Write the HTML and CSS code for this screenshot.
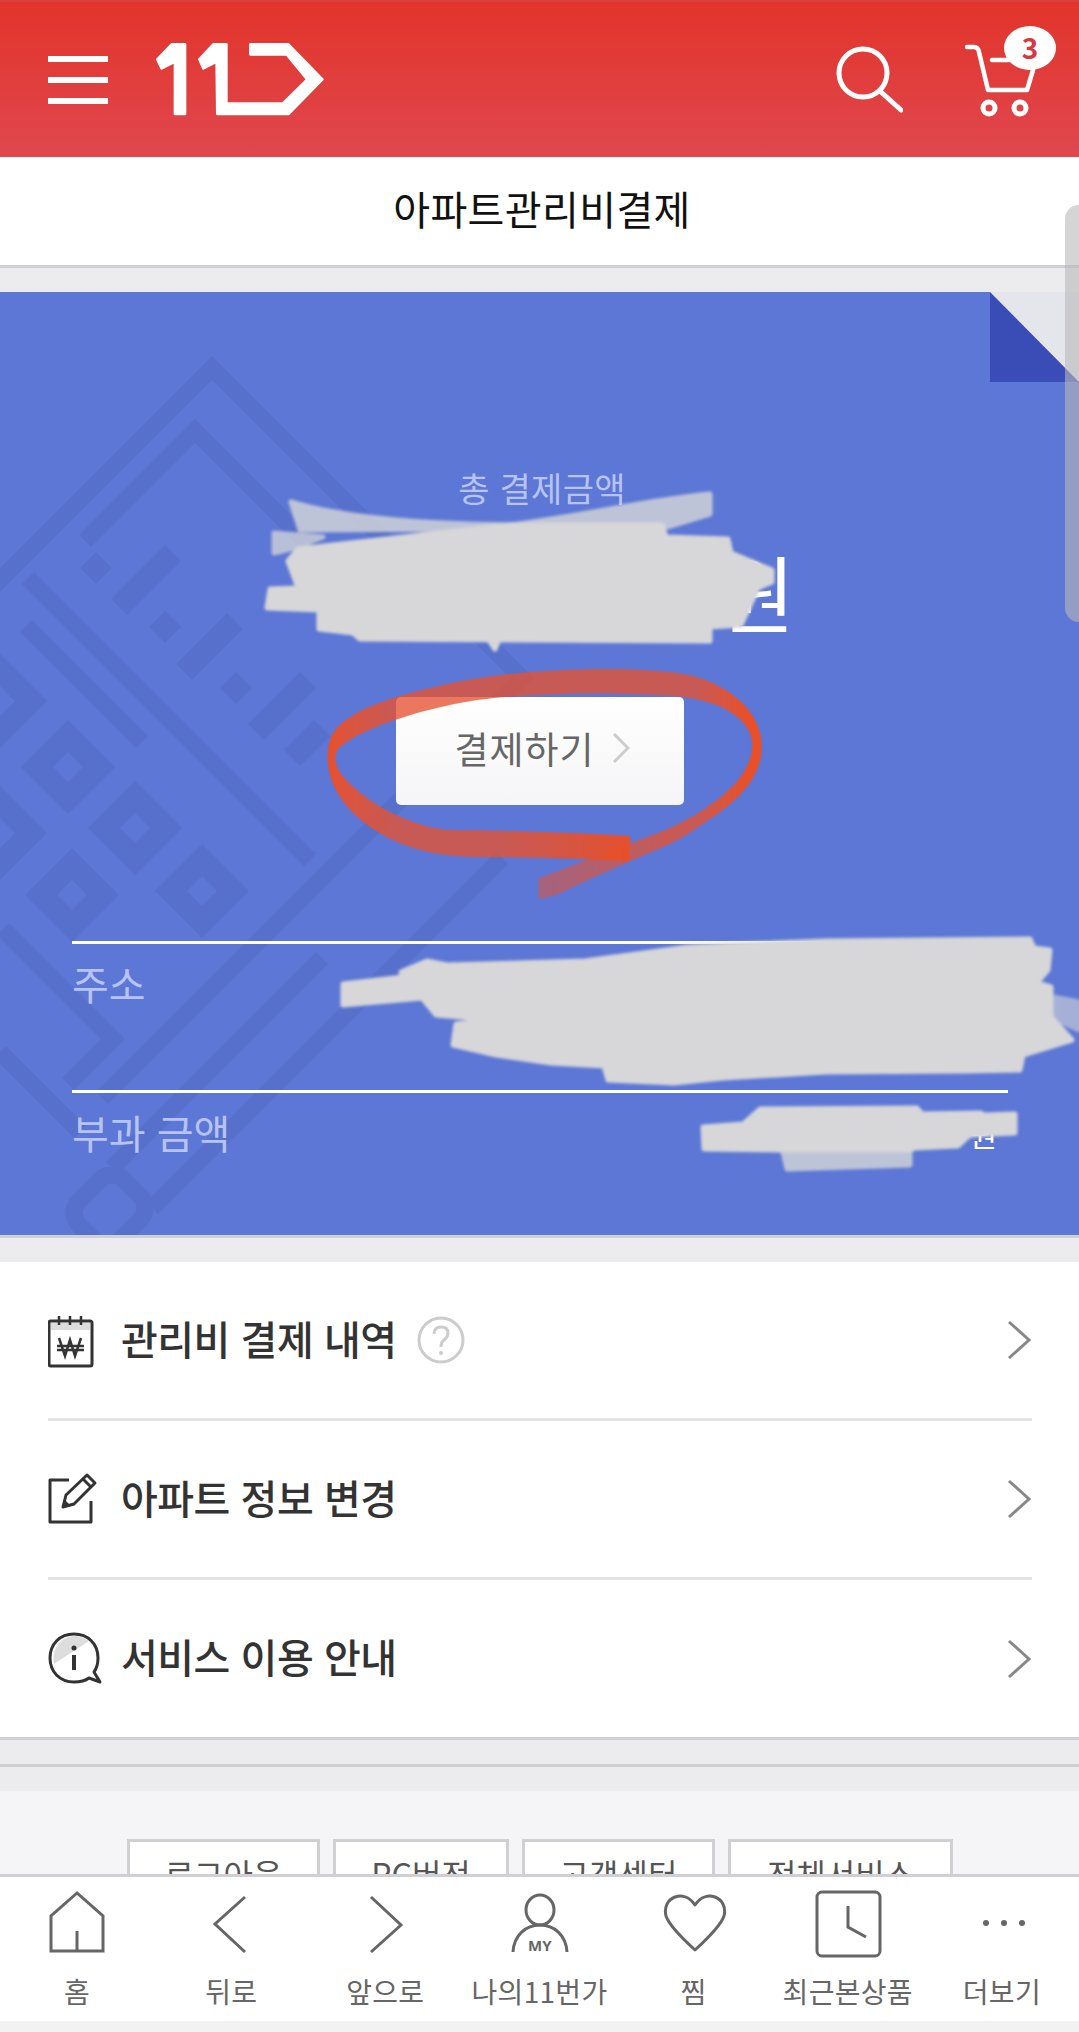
FILE: index.html
```html
<!DOCTYPE html>
<html lang="ko">
  <head>
    <meta charset="UTF-8">
    <title>아파트관리비결제</title>
    <link rel="stylesheet" href="styles.css">
  </head>
  <body>
    <div class="page">

      <!-- red top bar -->
      <div class="topbar">
        <div class="menu-btn"><span></span><span></span><span></span></div>
        <svg class="logo" width="170" height="80" viewBox="378 60 510 240">
          <path fill="#fff" stroke="#fff" stroke-width="8" stroke-linejoin="round" d="M382 118 L425 73 L465 73 L465 282 L435 282 L435 125 L395 145 Z"/>
          <path fill="#fff" stroke="#fff" stroke-width="8" stroke-linejoin="round" d="M508 118 L550 73 L589 73 L589 251 L758 251 L832 178 L770 103 L661 103 L661 73 L775 73 L877 178 L775 282 L562 282 L560 125 L520 145 Z"/>
        </svg>
        <div class="spacer"></div>
        <svg class="search" width="70" height="70" viewBox="0 0 70 70">
          <circle cx="30" cy="30" r="24" fill="none" stroke="#fff" stroke-width="5"/>
          <path d="M48 49 L68 67" stroke="#fff" stroke-width="5" stroke-linecap="round"/>
        </svg>
        <div class="cart">
          <svg width="72" height="80" viewBox="0 0 72 80">
            <path d="M2 7 H9 Q13 7 14 12 L23 50 H62 L68 30" fill="none" stroke="#fff" stroke-width="4.5" stroke-linecap="round" stroke-linejoin="round"/>
            <path d="M27 20 H45" stroke="#fff" stroke-width="4.5" stroke-linecap="round"/>
            <circle cx="24" cy="68" r="6" fill="none" stroke="#fff" stroke-width="5"/>
            <circle cx="55" cy="68" r="6" fill="none" stroke="#fff" stroke-width="5"/>
          </svg>
          <span class="cart-count">3</span>
        </div>
      </div>

      <div class="page-title">아파트관리비결제</div>
      <div class="band"></div>

      <!-- blue pay panel -->
      <div class="pay-panel">
        <svg class="pattern" width="1079" height="943" viewBox="0 292 1079 943">
          <g transform="translate(207 363) matrix(1 1 -1 1 0 0)" fill="none" stroke="#5770cc" stroke-width="12">
            <path d="M5 230 V0 H315 V420"/>
            <path d="M28 150 V40 H215"/>
            <path d="M18 197 H300"/>
            <path d="M41 222 H157"/>
            <path d="M181 385 H291 V430"/>
            <path d="M241 448 H321"/>
            <path d="M395 100 V450"/>
            <path d="M355 240 V450"/>
            <rect x="355" y="450" width="40" height="45" rx="12"/>
            <g stroke-width="16">
              <path d="M47 150 V166"/>
              <path d="M78 112 V166"/>
              <path d="M111 145 V161"/>
              <path d="M143 115 V166"/>
              <path d="M177 140 V156"/>
              <path d="M209 108 V160"/>
              <path d="M240 125 V155"/>
              <rect x="50" y="257" width="31" height="31"/>
              <rect x="117" y="256" width="31" height="31"/>
              <rect x="181" y="253" width="31" height="31"/>
              <rect x="246" y="251" width="31" height="31"/>
              <rect x="183" y="318" width="31" height="31"/>
              <rect x="116" y="323" width="31" height="31"/>
            </g>
          </g>
        </svg>
        <svg class="corner" width="89" height="90" viewBox="0 0 89 90">
          <rect width="89" height="90" fill="#3a4cb6"/>
          <path d="M0 0 H89 V90 Z" fill="#e5e5ec"/>
        </svg>

        <div class="pay-label">총 결제금액</div>
        <div class="pay-amount">원</div>
        <a class="pay-btn">결제하기
          <svg width="18" height="32" viewBox="0 0 18 32"><path d="M2 2 L16 16 L2 30" fill="none" stroke="#ccc" stroke-width="3"/></svg>
        </a>

        <div class="pay-rows">
          <div class="pay-row tall"><span>주소</span></div>
          <div class="pay-row"><span>부과 금액</span><b>원</b></div>
        </div>

        <!-- marker scribbles drawn over the screenshot -->
        <svg class="scribble" width="1079" height="943" viewBox="0 292 1079 943">
          <defs>
            <linearGradient id="loopGrad" gradientUnits="userSpaceOnUse" x1="80" y1="0" x2="1385" y2="0">
              <stop offset="0" stop-color="#e8502a" stop-opacity="1"/>
              <stop offset=".05" stop-color="#e65231" stop-opacity=".92"/>
              <stop offset=".16" stop-color="#e65231" stop-opacity=".78"/>
              <stop offset=".85" stop-color="#e65231" stop-opacity=".78"/>
              <stop offset=".97" stop-color="#e8502a" stop-opacity="1"/>
            </linearGradient>
            <linearGradient id="tailGrad" gradientUnits="userSpaceOnUse" x1="715" y1="0" x2="1102" y2="0">
              <stop offset="0" stop-color="#e65231" stop-opacity=".52"/>
              <stop offset="1" stop-color="#e65231" stop-opacity=".78"/>
            </linearGradient>
            <linearGradient id="headGrad" gradientUnits="userSpaceOnUse" x1="600" y1="0" x2="990" y2="0">
              <stop offset="0" stop-color="#e8502a" stop-opacity="0"/>
              <stop offset="1" stop-color="#ea4f26" stop-opacity=".85"/>
            </linearGradient>
            <filter id="soft"><feGaussianBlur stdDeviation="1.5"/></filter>
          </defs>
          <g fill="#d7d7d9" stroke="#d7d7d9" stroke-width="5" stroke-linejoin="round" filter="url(#soft)">
            <path opacity=".8" d="M291 502 C340 517 420 524 509 525 C580 517 650 499 710 494 L710 514 L664 528 L300 530 Z"/>
            <path opacity=".75" d="M274 533 L323 537 L298 547 L274 553 Z"/>
            <path d="M298 549 L509 525 L662 525 L666 537 L728 539 L731 553 L772 570 L772 582 L758 588 L741 625 L710 627 L710 641 L360 639 L353 633 L319 629 L319 610 L267 608 L270 589 L298 588 L288 561 Z"/>
            <path d="M487 637 L495 649 L500 637 Z"/>
            <path d="M401 972 L427 961 L447 965 L585 961 L688 947 L826 941 L1030 939 L1034 948 L1050 950 L1048 970 L1037 983 L1051 987 L1051 1017 L1072 1040 L1023 1055 L1020 1070 L964 1071 L826 1072 L723 1078 L674 1083 L608 1080 L604 1066 L551 1063 L496 1055 L453 1045 L456 1024 L496 1020 L436 1015 L422 998 L343 1005 L343 984 L403 977 Z"/>
            <path opacity=".6" d="M1053 997 L1079 1002 L1079 1030 L1053 1018 Z"/>
            <path d="M703 1127 L743 1124 L760 1109 L917 1108 L922 1114 L981 1113 L984 1115 L1015 1114 L1015 1133 L970 1135 L958 1146 L915 1148 L910 1150 L781 1150 L704 1149 Z"/>
            <path opacity=".8" d="M783 1152 L910 1150 L910 1165 L787 1169 Z"/>
          </g>
          <g transform="translate(300 480) scale(.33333)">
            <path fill="url(#tailGrad)" d="M1102 1048 L715 1195 L715 1258 L770 1245 C880 1190 1000 1140 1102 1095 Z"/>
            <path fill="url(#loopGrad)" d="M990 1068 C850 1058 650 1052 450 1050 C330 1040 200 970 130 890 C105 860 100 830 112 810 C140 770 300 700 500 665 C640 640 900 635 1080 645 C1220 650 1320 690 1350 760 C1365 800 1355 850 1310 905 C1240 980 1160 1020 1100 1048 L1100 1095 C1160 1070 1200 1035 1240 1010 C1330 950 1385 880 1385 800 C1385 700 1300 620 1170 585 C1000 555 700 565 500 600 C300 640 120 690 90 780 C70 850 90 930 160 1000 C240 1075 350 1125 500 1130 C650 1135 850 1130 988 1142 Z"/>
            <path fill="url(#headGrad)" d="M600 1053 L990 1068 L988 1142 L600 1132 Z"/>
          </g>
        </svg>
      </div>

      <div class="band"></div>

      <!-- menu list -->
      <div class="menu-list">
        <div class="menu-row">
          <svg class="menu-icon" width="54" height="56" viewBox="0 0 54 56">
            <rect x="1" y="9" width="43" height="45" fill="#fff" stroke="#333" stroke-width="3" rx="2"/>
            <rect x="3" y="11" width="39" height="7" fill="#ddd"/>
            <path d="M11 4 V13 M22 4 V13 M33 4 V13" stroke="#333" stroke-width="2.5"/>
            <path d="M11 26 L17 44 L22 28 L27 44 L33 26 M9 34 H36 M9 38 H36" fill="none" stroke="#333" stroke-width="2.5"/>
          </svg>
          <span class="menu-text">관리비 결제 내역</span>
          <svg class="help" width="48" height="48" viewBox="0 0 48 48">
            <circle cx="24" cy="24" r="22" fill="none" stroke="#ccc" stroke-width="3"/>
            <path d="M17 18 Q17 11 24 11 Q31 11 31 17 Q31 21 27 24 Q24 26 24 31" fill="none" stroke="#ccc" stroke-width="3"/>
            <circle cx="24" cy="37" r="2" fill="#ccc"/>
          </svg>
          <svg class="menu-arrow" width="26" height="40" viewBox="0 0 26 40"><path d="M3 2 L23 20 L3 38" fill="none" stroke="#888" stroke-width="3"/></svg>
        </div>
        <div class="menu-row">
          <svg class="menu-icon" width="54" height="56" viewBox="0 0 54 56">
            <path d="M21 9 H2 V51 H43 V30" fill="none" stroke="#333" stroke-width="3" stroke-linejoin="round"/>
            <path d="M15 36 L18 24 L39 4 L47 12 L26 33 Z" fill="#fff" stroke="#333" stroke-width="3" stroke-linejoin="round"/>
            <path d="M35 8 L43 16" stroke="#333" stroke-width="3"/>
            <path d="M15 36 L17 29 L22 34 Z" fill="#333"/>
          </svg>
          <span class="menu-text">아파트 정보 변경</span>
          <svg class="menu-arrow" width="26" height="40" viewBox="0 0 26 40"><path d="M3 2 L23 20 L3 38" fill="none" stroke="#888" stroke-width="3"/></svg>
        </div>
        <div class="menu-row">
          <svg class="menu-icon" width="54" height="54" viewBox="0 0 54 54">
            <path d="M26 2 C12 2 2 12 2 26 C2 40 12 50 26 50 C32 50 37 49 41 46 L52 50 L46 40 C49 36 50 31 50 26 C50 12 40 2 26 2 Z" fill="#fff" stroke="#333" stroke-width="3" stroke-linejoin="round"/>
            <path d="M6 32 C3 18 12 5 26 4 C32 4 37 6 41 9 Z" fill="#ddd"/>
            <circle cx="26" cy="16" r="2.5" fill="#333"/>
            <path d="M26 23 V38" stroke="#333" stroke-width="4"/>
          </svg>
          <span class="menu-text">서비스 이용 안내</span>
          <svg class="menu-arrow" width="26" height="40" viewBox="0 0 26 40"><path d="M3 2 L23 20 L3 38" fill="none" stroke="#888" stroke-width="3"/></svg>
        </div>
      </div>

      <div class="band thin"></div>
      <div class="band thin"></div>

      <!-- footer links, cut off by the tab bar -->
      <div class="foot">
        <a class="w193">로그아웃</a>
        <a class="w176">PC버전</a>
        <a class="w194">고객센터</a>
        <a class="w226">전체서비스</a>
      </div>

      <!-- bottom tab bar -->
      <div class="tabbar">
        <div class="tab">
          <svg width="60" height="70" viewBox="0 0 60 70"><path d="M30 3 L4 26 V61 H56 V26 Z M30 41 V61" fill="none" stroke="#666" stroke-width="3"/></svg>
          <span>홈</span>
        </div>
        <div class="tab">
          <svg width="60" height="70" viewBox="0 0 60 70"><path d="M44 7 L14 34 L44 62" fill="none" stroke="#666" stroke-width="3"/></svg>
          <span>뒤로</span>
        </div>
        <div class="tab">
          <svg width="60" height="70" viewBox="0 0 60 70"><path d="M16 7 L46 35 L16 62" fill="none" stroke="#666" stroke-width="3"/></svg>
          <span>앞으로</span>
        </div>
        <div class="tab">
          <svg width="60" height="70" viewBox="0 0 60 70">
            <ellipse cx="31" cy="20" rx="14" ry="15" fill="none" stroke="#666" stroke-width="3"/>
            <path d="M4 62 C5 45 17 35 31 35 C45 35 57 45 58 62" fill="none" stroke="#666" stroke-width="3"/>
            <text x="31" y="61" text-anchor="middle" class="my-text">MY</text>
          </svg>
          <span>나의11번가</span>
        </div>
        <div class="tab">
          <svg width="66" height="70" viewBox="0 0 66 70"><path d="M34 15 C28 6 20 5 14 7 C6 10 3 18 5 26 C8 35 22 49 34 60 C46 49 60 35 63 26 C65 18 62 10 54 7 C48 5 40 6 34 15 Z" fill="none" stroke="#666" stroke-width="3" stroke-linejoin="round"/></svg>
          <span>찜</span>
        </div>
        <div class="tab">
          <svg width="70" height="70" viewBox="0 0 70 70">
            <rect x="4" y="2" width="63" height="64" rx="5" fill="none" stroke="#666" stroke-width="3"/>
            <path d="M35 16 V37 L53 47" fill="none" stroke="#666" stroke-width="3"/>
          </svg>
          <span>최근본상품</span>
        </div>
        <div class="tab">
          <svg width="60" height="70" viewBox="0 0 60 70">
            <circle cx="14" cy="33" r="3" fill="#666"/>
            <circle cx="32" cy="33" r="3" fill="#666"/>
            <circle cx="50" cy="33" r="3" fill="#666"/>
          </svg>
          <span>더보기</span>
        </div>
      </div>
      <div class="bottom-strip"></div>

      <div class="scroll-thumb"></div>
    </div>
  </body>
</html>
```
FILE: styles.css
```css
* {
  box-sizing: border-box;
}

html, body {
  margin: 0;
  padding: 0;
}

body {
  font-family: "Noto Sans CJK KR", "Noto Sans", sans-serif;
  background-color: #fff;
}

.page {
  position: relative;
  width: 1079px;
  height: 2032px;
  overflow: hidden;
}

/* top bar */
.topbar {
  display: flex;
  align-items: center;
  height: 157px;
  padding: 0 42px 0 48px;
  background: linear-gradient(#e2342a, #e0474f);
  border-top: 2px solid #d8403a;
}

.menu-btn {
  display: flex;
  flex-direction: column;
  gap: 15px;
  width: 60px;
}

.menu-btn span {
  display: block;
  height: 6px;
  background-color: #fff;
}

.logo {
  margin-left: 48px;
}

.spacer {
  flex: 1;
}

.search {
  margin-top: -3px;
  margin-right: 62px;
}

.cart {
  position: relative;
  width: 72px;
  height: 80px;
}

.cart-count {
  position: absolute;
  top: -14px;
  left: 39px;
  width: 52px;
  height: 44px;
  border-radius: 50%;
  background-color: #fff;
  color: #d8383f;
  font-size: 28px;
  font-weight: 700;
  line-height: 42px;
  text-align: center;
}

.page-title {
  height: 111px;
  padding-left: 5px;
  border-bottom: 3px solid #cfcfd4;
  color: #111;
  font-size: 40px;
  letter-spacing: .4px;
  line-height: 103px;
  text-align: center;
}

.band {
  height: 24px;
  background-color: #ececee;
}

.band.thin {
  height: 27px;
  border-top: 3px solid #cfcfd4;
}

/* pay panel */
.pay-panel {
  position: relative;
  height: 946px;
  padding-top: 171px;
  overflow: hidden;
  border-bottom: 3px solid #cfcfd4;
  background-color: #5c77d5;
}

.pattern, .scribble, .corner {
  position: absolute;
  top: 0;
  left: 0;
}

.corner {
  left: 990px;
}

.pay-label {
  position: relative;
  padding-left: 5px;
  color: #b7c4f3;
  font-size: 34px;
  letter-spacing: .3px;
  line-height: 50px;
  text-align: center;
}

.pay-amount {
  position: relative;
  margin-top: 33px;
  padding-left: 718px;
  color: #fff;
  font-size: 84px;
  line-height: 90px;
}

.pay-btn {
  position: relative;
  display: flex;
  align-items: center;
  justify-content: center;
  gap: 17px;
  width: 288px;
  height: 108px;
  margin: 61px 0 0 396px;
  padding: 0 0 6px 4px;
  border-radius: 5px;
  background: linear-gradient(#fff, #f5f5f7);
  color: #666;
  font-size: 37px;
  letter-spacing: 1px;
}

.pay-rows {
  position: relative;
  width: 936px;
  margin: 136px 0 0 72px;
}

.pay-row {
  display: flex;
  justify-content: space-between;
  align-items: flex-start;
  height: 146px;
  padding: 9px 11px 0 0;
  border-top: 3px solid #fff;
  color: #b7c4f3;
  font-size: 40px;
}

.pay-row.tall {
  height: 149px;
}

.pay-row span {
  line-height: 60px;
}

.pay-row b {
  padding-top: 6px;
  color: #fff;
  font-size: 30px;
  font-weight: 400;
  line-height: 50px;
}

/* menu */
.menu-list {
  padding: 0 47px 0 48px;
  background-color: #fff;
}

.menu-row {
  display: flex;
  align-items: center;
  height: 159px;
  border-bottom: 3px solid #e4e4e4;
}

.menu-row:last-child {
  height: 157px;
  border-bottom: 0;
}

.menu-icon {
  flex: none;
  width: 54px;
}

.menu-text {
  margin-left: 19px;
  padding-bottom: 5px;
  color: #333;
  font-size: 40px;
  font-weight: 500;
  letter-spacing: -.5px;
}

.help {
  margin-left: 20px;
}

.menu-arrow {
  margin-left: auto;
}

/* footer */
.foot {
  display: flex;
  justify-content: flex-start;
  gap: 13px;
  height: 83px;
  padding: 48px 0 0 127px;
  overflow: hidden;
  background-color: #f5f5f8;
}

.foot a {
  flex: none;
  height: 70px;
  border: 3px solid #d0d0d4;
  background-color: #fff;
  color: #555;
  font-size: 32px;
  line-height: 62px;
  text-align: center;
}

.foot a.w193 { width: 193px; }
.foot a.w176 { width: 176px; }
.foot a.w194 { width: 193px; }
.foot a.w226 { width: 225px; }

/* tab bar */
.tabbar {
  display: grid;
  grid-template-columns: repeat(7, 1fr);
  height: 147px;
  padding-top: 13px;
  border-top: 3px solid #d0d0d4;
  background-color: #fff;
}

.tab {
  display: flex;
  flex-direction: column;
  align-items: center;
  color: #666;
  font-size: 28px;
  letter-spacing: .3px;
  white-space: nowrap;
}

.tab svg {
  display: block;
  flex: none;
}

.tab span {
  margin-top: 11px;
  line-height: 40px;
}

.my-text {
  fill: #666;
  font-family: "Noto Sans", sans-serif;
  font-size: 15px;
  font-weight: 700;
}

.bottom-strip {
  height: 12px;
  background-color: #f2f2f2;
}

/* browser scroll thumb on top of everything */
.scroll-thumb {
  position: absolute;
  top: 205px;
  left: 1065px;
  width: 14px;
  height: 417px;
  border-radius: 14px 0 0 14px;
  background-color: rgba(185, 185, 185, .6);
}
```
